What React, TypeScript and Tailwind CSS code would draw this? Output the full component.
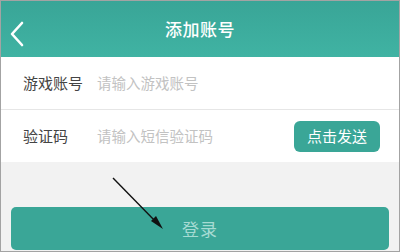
const FONT = { fontFamily: '"Noto Sans CJK SC", "Noto Sans", sans-serif' };

export default function App() {
  return (
    <div
      className="relative w-[400px] h-[252px] overflow-hidden border border-[#a3a3a3] bg-[#f2f2f2]"
      style={FONT}
    >
      {/* header */}
      <div className="relative h-[56px] flex items-center justify-center bg-gradient-to-b from-[#39a597] to-[#40b3a3]">
        <svg className="absolute left-[8px] top-[20px]" width="16" height="26" viewBox="0 0 16 26">
          <polyline
            points="13,2 3,13 13,24"
            fill="none"
            stroke="white"
            strokeWidth="2.6"
            strokeLinecap="round"
            strokeLinejoin="round"
          />
        </svg>
        <h1 className="text-white text-[17px] font-medium tracking-[0.5px]">添加账号</h1>
      </div>

      {/* form */}
      <div className="bg-white">
        <div className="h-[53px] flex items-center px-[22px] border-b border-[#e6e6e6]">
          <span className="w-[74px] text-[15px] text-[#444]">游戏账号</span>
          <span className="text-[14.5px] text-[#c2c2c2]">请输入游戏账号</span>
        </div>
        <div className="h-[52px] flex items-center pl-[22px] pr-[19px]">
          <span className="w-[74px] text-[15px] text-[#444]">验证码</span>
          <span className="flex-1 text-[14.5px] text-[#c2c2c2]">请输入短信验证码</span>
          <button className="w-[86px] h-[31px] rounded-[6px] bg-[#3aa697] text-white text-[15px]">
            点击发送
          </button>
        </div>
      </div>

      {/* login */}
      <div className="px-[10px] pt-[45px]">
        <button className="w-full h-[43px] rounded-[5px] bg-[#3aa697] text-[#a6dbd3] text-[17px] tracking-[1px]">
          登录
        </button>
      </div>

      {/* annotation arrow */}
      <svg className="absolute left-0 top-0 pointer-events-none" width="400" height="252">
        <line x1="112" y1="177" x2="156" y2="222" stroke="#111" strokeWidth="1.4" />
        <polygon points="162,228 150,220 155,215" fill="#111" />
      </svg>
    </div>
  );
}
